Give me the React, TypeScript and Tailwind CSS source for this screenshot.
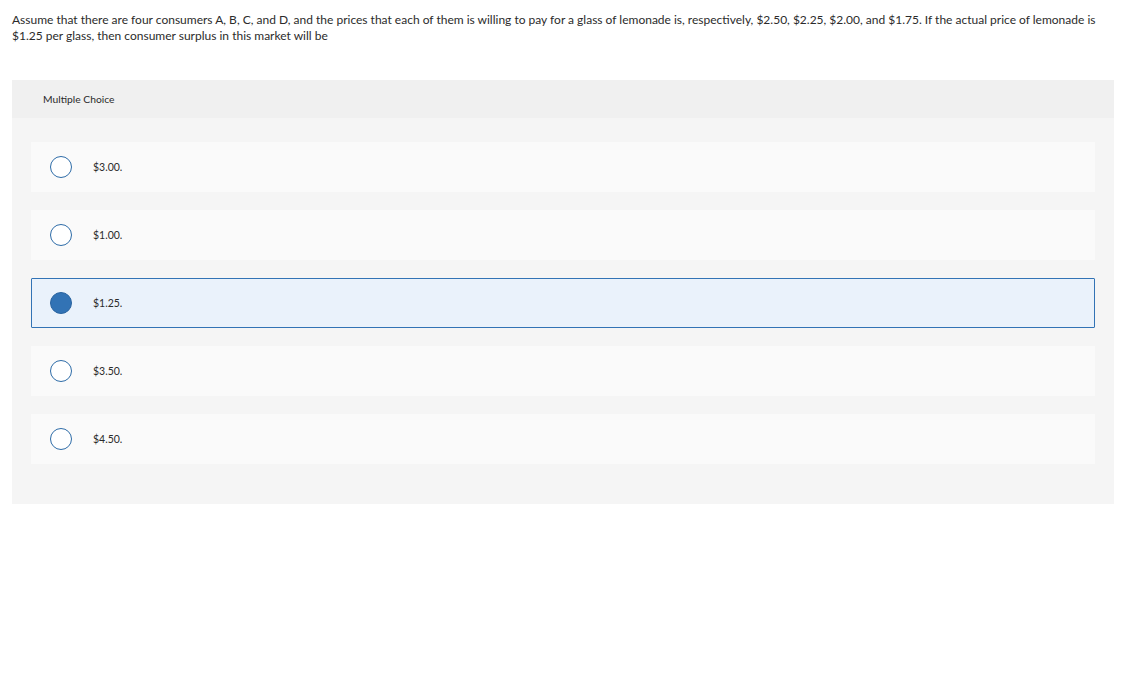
import React from "react";

const options = ["$3.00.", "$1.00.", "$1.25.", "$3.50.", "$4.50."];
const selected = 2;

export default function App() {
  return (
    <div className="min-h-screen bg-white text-[#333]" style={{ fontFamily: "Lato, 'Open Sans', sans-serif" }}>
      <div className="px-3 pt-[12px] text-[12px] leading-[16px] text-[#2b2b2b]">
        Assume that there are four consumers A, B, C, and D, and the prices that each of them is willing to pay for a glass of lemonade is, respectively, $2.50, $2.25, $2.00, and $1.75. If the actual price of lemonade is $1.25 per glass, then consumer surplus in this market will be
      </div>
      <div className="mx-3 mt-[36px] w-[1102px] bg-[#f5f5f5]">
        <div className="flex h-[38px] items-center bg-[#f0f0f0] pl-[31px] pt-[2px] text-[10.3px] text-[#2b2b2b]">
          Multiple Choice
        </div>
        <div className="flex flex-col gap-[18px] px-[19px] pt-[24px] pb-[40px]">
          {options.map((o, i) => {
            const sel = i === selected;
            return (
              <div
                key={o}
                className={
                  sel
                    ? "flex h-[50px] items-center rounded-[1px] border border-[#3273b5] bg-[#eaf2fb] pl-[18px]"
                    : "flex h-[50px] items-center border border-transparent bg-[#fafafa] pl-[18px]"
                }
              >
                <span
                  className={
                    sel
                      ? "h-[22px] w-[22px] shrink-0 rounded-full border-[1.5px] border-[#2a64a0] bg-[#3273b5]"
                      : "h-[22px] w-[22px] shrink-0 rounded-full border-[1.5px] border-[#2e6ca8] bg-white"
                  }
                />
                <span className="ml-[21px] pt-[2px] text-[10.5px] text-[#2b2b2b]">{o}</span>
              </div>
            );
          })}
        </div>
      </div>
    </div>
  );
}
